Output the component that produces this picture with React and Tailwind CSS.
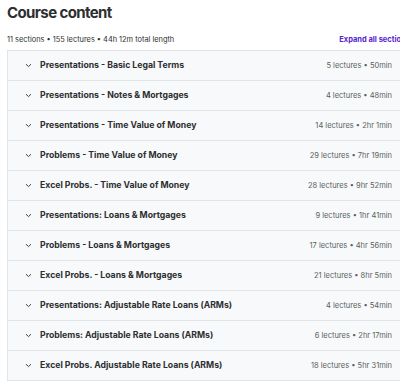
import React from "react";

const rows = [
  ["Presentations - Basic Legal Terms", "5 lectures • 50min"],
  ["Presentations - Notes & Mortgages", "4 lectures • 48min"],
  ["Presentations - Time Value of Money", "14 lectures • 2hr 1min"],
  ["Problems - Time Value of Money", "29 lectures • 7hr 19min"],
  ["Excel Probs. - Time Value of Money", "28 lectures • 9hr 52min"],
  ["Presentations: Loans & Mortgages", "9 lectures • 1hr 41min"],
  ["Problems - Loans & Mortgages", "17 lectures • 4hr 56min"],
  ["Excel Probs. - Loans & Mortgages", "21 lectures • 8hr 5min"],
  ["Presentations: Adjustable Rate Loans (ARMs)", "4 lectures • 54min"],
  ["Problems: Adjustable Rate Loans (ARMs)", "6 lectures • 2hr 17min"],
  ["Excel Probs. Adjustable Rate Loans (ARMs)", "18 lectures • 5hr 31min"],
];

function Chevron() {
  return (
    <svg width="7" height="5" viewBox="0 0 7 5" className="shrink-0">
      <path d="M1 1.2 L3.5 3.6 L6 1.2" fill="none" stroke="#3d4043" strokeWidth="1" />
    </svg>
  );
}

export default function App() {
  return (
    <div className="w-[400px] h-[382px] overflow-hidden bg-white text-[#2d2f31]" style={{ fontFamily: "Inter, 'Noto Sans', sans-serif" }}>
      <div className="pl-[7px] pt-[2px]">
        <h2 className="text-[15px] leading-[22px] font-bold tracking-[-0.6px]">Course content</h2>
        <div className="flex items-center justify-between mt-[10px] h-[12px] w-[420px]">
          <span className="text-[7.4px] text-[#2d2f31]">11 sections • 155 lectures • 44h 12m total length</span>
          <span className="text-[7.5px] font-bold text-[#5624d0] pr-[17px]">Expand all sections</span>
        </div>
        <div className="mt-[4px] w-[420px] border border-[#e2e5e8] border-b-0">
          {rows.map(([t, m], i) => (
            <div key={i} className="h-[30px] bg-[#f7f9fa] border-b border-[#e2e5e8] flex items-center pl-[17px] pr-[34px]">
              <Chevron />
              <span className="ml-[8px] text-[8.7px] font-bold flex-1 whitespace-nowrap">{t}</span>
              <span className="text-[7.5px] text-[#5a5f63] whitespace-nowrap">{m}</span>
            </div>
          ))}
        </div>
      </div>
    </div>
  );
}
